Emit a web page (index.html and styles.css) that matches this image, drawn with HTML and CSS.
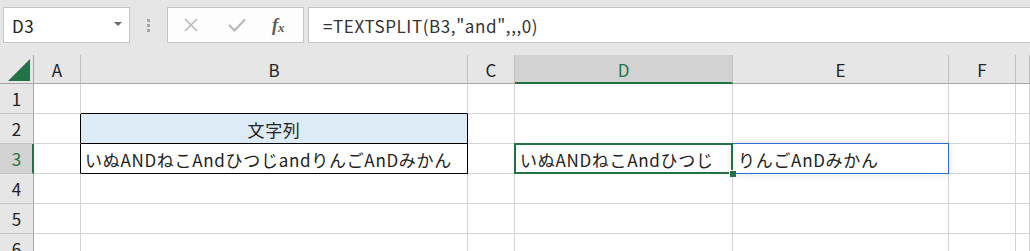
FILE: index.html
```html
<!DOCTYPE html>
<html lang="ja">
<head>
    <meta charset="UTF-8">
    <title>TEXTSPLIT</title>
    <link rel="stylesheet" href="styles.css">
</head>
<body>

    <!-- Formula bar -->
    <div class="toolbar">
        <div class="name-box">
            <span>D3</span>
            <span class="caret"></span>
        </div>
        <div class="grip"><i></i><i></i><i></i></div>
        <div class="fx-buttons">
            <svg class="btn-icon" width="16" height="16" viewBox="0 0 16 16">
                <path d="M2 2 L14 14 M14 2 L2 14" stroke="#b8b8b8" stroke-width="1.6" fill="none"/>
            </svg>
            <svg class="btn-icon" width="18" height="14" viewBox="0 0 18 14">
                <path d="M1 7 L6.5 12.5 L17 1.5" stroke="#b8b8b8" stroke-width="2.2" fill="none"/>
            </svg>
            <span class="fx">f<sub>x</sub></span>
        </div>
        <div class="formula">=TEXTSPLIT(B3,"and",,,0)</div>
    </div>

    <!-- Sheet -->
    <div class="sheet">
        <div class="corner"><span class="tri"></span></div>
        <div class="col-head">A</div>
        <div class="col-head">B</div>
        <div class="col-head">C</div>
        <div class="col-head active">D</div>
        <div class="col-head">E</div>
        <div class="col-head">F</div>
        <div class="col-head"></div>

        <div class="row-head">1</div>
        <div class="cell"></div>
        <div class="cell bb"></div>
        <div class="cell"></div>
        <div class="cell"></div>
        <div class="cell"></div>
        <div class="cell"></div>
        <div class="cell"></div>

        <div class="row-head">2</div>
        <div class="cell br"></div>
        <div class="cell title bb br">文字列</div>
        <div class="cell"></div>
        <div class="cell"></div>
        <div class="cell"></div>
        <div class="cell"></div>
        <div class="cell"></div>

        <div class="row-head active">3</div>
        <div class="cell br"></div>
        <div class="cell bb br">いぬANDねこAndひつじandりんごAnDみかん</div>
        <div class="cell"></div>
        <div class="cell selected">いぬANDねこAndひつじ<span class="sel"></span><span class="handle"></span></div>
        <div class="cell spill">りんごAnDみかん<span class="spill-box"></span></div>
        <div class="cell"></div>
        <div class="cell"></div>

        <div class="row-head">4</div>
        <div class="cell"></div>
        <div class="cell"></div>
        <div class="cell"></div>
        <div class="cell"></div>
        <div class="cell"></div>
        <div class="cell"></div>
        <div class="cell"></div>

        <div class="row-head">5</div>
        <div class="cell"></div>
        <div class="cell"></div>
        <div class="cell"></div>
        <div class="cell"></div>
        <div class="cell"></div>
        <div class="cell"></div>
        <div class="cell"></div>

        <div class="row-head">6</div>
        <div class="cell"></div>
        <div class="cell"></div>
        <div class="cell"></div>
        <div class="cell"></div>
        <div class="cell"></div>
        <div class="cell"></div>
        <div class="cell"></div>
    </div>

</body>
</html>
```

FILE: styles.css
```css
* { margin: 0; padding: 0; box-sizing: border-box; }
body {
    font-family: "Noto Sans CJK JP", "Noto Sans", sans-serif;
    font-size: 17px;
    color: #222;
    background: #fff;
    overflow: hidden;
    height: 251px;
}

/* Formula bar */
.toolbar {
    height: 55px;
    background: #e6e6e6;
    display: flex;
    align-items: flex-start;
    padding-top: 7px;
}
.name-box {
    margin-left: 3px;
    width: 127px;
    height: 36px;
    background: #fff;
    border: 1px solid #c6c6c6;
    display: flex;
    align-items: center;
    justify-content: space-between;
    padding: 0 7px 0 8px;
    letter-spacing: 0.5px;
}
.caret {
    width: 0; height: 0;
    border-left: 4px solid transparent;
    border-right: 4px solid transparent;
    border-top: 4px solid #6a6a6a;
    margin-top: -3px;
}
.grip {
    width: 37px;
    height: 36px;
    display: flex;
    flex-direction: column;
    align-items: center;
    justify-content: center;
    gap: 2px;
}
.grip i { width: 3px; height: 3px; background: #a6a6a6; display: block; }
.fx-buttons {
    width: 137px;
    height: 36px;
    background: #fdfdfd;
    border: 1px solid #c6c6c6;
    display: flex;
    align-items: center;
    padding-left: 15px;
    gap: 29px;
}
.btn-icon { display: block; }
.fx {
    font-family: "Liberation Serif", serif;
    font-style: italic;
    font-weight: bold;
    font-size: 18px;
    color: #5a5a5a;
    margin-left: -3px;
}
.fx sub { font-size: 13px; vertical-align: -1px; }
.formula {
    flex: 1;
    margin-left: 4px;
    height: 36px;
    background: #fff;
    border: 1px solid #c6c6c6;
    border-right: none;
    display: flex;
    align-items: center;
    padding-left: 14px;
    color: #333;
    letter-spacing: 0.6px;
}

/* Grid */
.sheet {
    display: grid;
    grid-template-columns: 34px 47px 387px 47px 218px 216px 67px 1fr;
    grid-template-rows: 29px repeat(6, 30px);
}
.corner {
    background: #e6e6e6;
    border-right: 1px solid #a6a6a6;
    border-bottom: 1px solid #a6a6a6;
    position: relative;
}
.tri {
    position: absolute;
    right: 3px; bottom: 2px;
    width: 0; height: 0;
    border-left: 22px solid transparent;
    border-bottom: 22px solid #217346;
}
.col-head {
    background: #e6e6e6;
    border-right: 1px solid #bfbfbf;
    border-bottom: 1px solid #a6a6a6;
    display: flex;
    align-items: center;
    justify-content: center;
    color: #222;
}
.col-head.active {
    background: #d2d2d2;
    color: #217346;
    border-bottom: 2px solid #217346;
    padding-top: 1px;
}
.row-head {
    background: #e6e6e6;
    border-right: 1px solid #a6a6a6;
    border-bottom: 1px solid #c6c6c6;
    display: flex;
    align-items: center;
    justify-content: center;
    color: #222;
}
.row-head.active {
    background: #d2d2d2;
    color: #217346;
    border-right: 2px solid #217346;
    padding-left: 1px;
}
.cell {
    border-right: 1px solid #d4d4d4;
    border-bottom: 1px solid #d4d4d4;
    display: flex;
    align-items: center;
    padding: 1px 0 0 4px;
    white-space: nowrap;
    position: relative;
    letter-spacing: 0.7px;
}
.cell.bb { border-bottom-color: #000; }
.cell.br { border-right-color: #000; }
.cell.title {
    background: #ddebf7;
    justify-content: center;
    padding-left: 0;
}

/* Selection and spill range */
.cell.selected { padding-left: 5px; z-index: 2; }
.cell.spill { padding-left: 5px; z-index: 1; }
.sel {
    position: absolute;
    left: -1px; top: -1px; right: -1px; bottom: -1px;
    border: 2px solid #217346;
}
.handle {
    position: absolute;
    right: -4px; bottom: -4px;
    width: 7px; height: 7px;
    background: #217346;
    border: 1px solid #fff;
    border-right: none;
    border-bottom: none;
}
.spill-box {
    position: absolute;
    left: -1px; top: -1px; right: -1px; bottom: -1px;
    border: 1px solid #2f6fd2;
    box-shadow: 0 0 8px rgba(0, 0, 0, 0.12);
}
```
